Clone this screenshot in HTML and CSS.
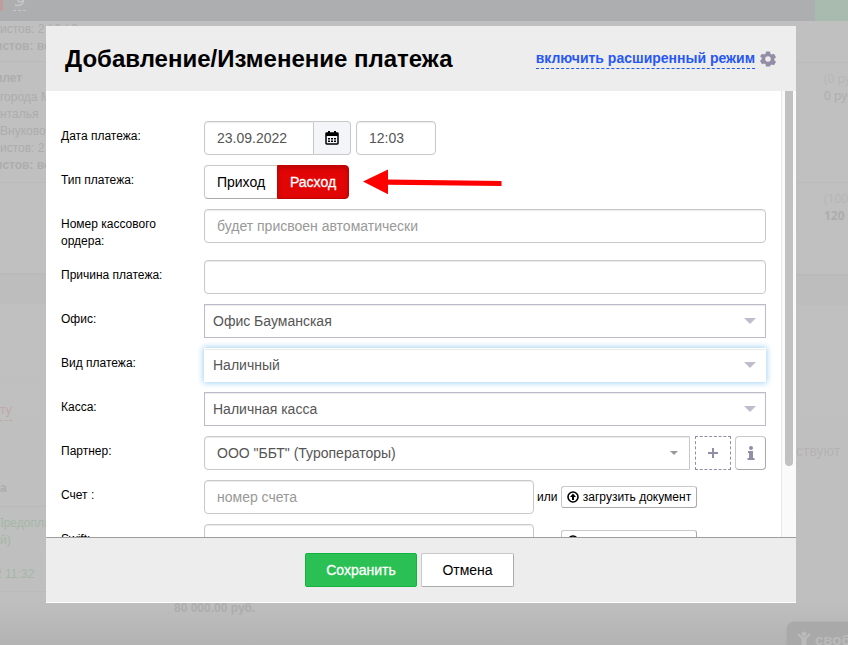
FILE: index.html
```html
<!DOCTYPE html>
<html lang="ru">
<head>
<meta charset="utf-8">
<title>Добавление/Изменение платежа</title>
<link rel="stylesheet" href="styles.css">
</head>
<body>
<div class="page">
  <div class="topbar">
    <span class="topbar-alert"></span>
    <svg class="topbar-icon" width="14" height="12" viewBox="0 0 14 12"><path d="M10.500 0C11 4 7 6.500 2 5M5 0C5 2.500 9 2.500 10 0" fill="none" stroke="#c6c7c8" stroke-width="1.500"/><path d="M0 10.500h3M5 10.500h3M10 10.500h3" stroke="#c6c7c8"/></svg>
    <span class="topbar-green"></span>
  </div>
  <div class="columns">
    <div class="left">
      <section class="cell"><p>истов: 2 / 0 / 0</p><p class="clipped"><b>истов: вс</b></p></section>
      <section class="cell trip"><p class="head clipped"><b>илет</b></p><p>города М</p><p>нталья</p><p>Внуково</p><p>истов: 2</p><p class="clipped"><b>истов: вс</b></p></section>
      <section class="cell space"></section>
      <section class="band"></section>
      <section class="cell agent"><a href="#">ту</a></section>
      <section class="cell caption"><b>а</b></section>
      <section class="cell paid"><p class="clipped">Предопла</p><p>й)</p><p class="when clipped">2 11:32</p></section>
      <section class="total"><b>80 000.00 руб.</b></section>
    </div>
    <div class="right">
      <section class="sum first"><p class="pale">(0 руб.)</p><p>0 руб.</p></section>
      <section class="sum"><p class="pale">(100%)</p><p><b>120 000</b></p></section>
      <section class="band"></section>
      <section class="none">ствуют</section>
    </div>
  </div>
  <div class="chat">
    <svg width="14" height="16" viewBox="0 0 14 16"><circle cx="7" cy="3" r="2.500" fill="#bababa"/><path d="M1 3l4 4h4l4-4" fill="none" stroke="#bababa" stroke-width="2"/><path d="M4.500 6h5v10h-5z" fill="#bababa"/></svg>
    <span>свободно</span>
  </div>
</div>

<div class="overlay">
  <form class="modal">
    <header class="modal-head">
      <h1>Добавление/Изменение платежа</h1>
      <a class="mode" href="#">включить расширенный режим</a>
      <svg class="gear" width="16" height="16" viewBox="0 0 16 16"><path fill-rule="evenodd" fill="#938da6" d="M6 .5h4l.5 2.200 1.400.8 2.100-.7 2 3.400-1.700 1.500v1.600l1.700 1.500-2 3.400-2.100-.7-1.400.8L10 15.500H6l-.5-2.200-1.400-.8-2.100.7-2-3.400 1.700-1.500V6.700L0 5.200l2-2.400 2.100.7 1.400-.8zM8 5.200a2.800 2.800 0 1 0 0 5.600 2.800 2.800 0 0 0 0-5.600z"/></svg>
    </header>

    <div class="modal-body">
      <div class="fields">
        <div class="row">
          <label for="date">Дата платежа:</label>
          <div class="control">
            <div class="date-group">
              <input id="date" class="input" type="text" value="23.09.2022">
              <button type="button" class="addon" aria-label="Календарь"><svg width="14" height="16" viewBox="0 0 14 16"><path d="M1.700 3h10.600q.7 0 .7.7v9.600q0 .7-.7.7H1.700q-.7 0-.7-.7V3.700q0-.7.7-.7z" fill="none" stroke="#000" stroke-width="1.500"/><path d="M1 3h12v3H1zM3 1h2v3H3zM9 1h2v3H9z"/><path d="M3 8h2v1.500H3zM6 8h2v1.500H6zM9 8h2v1.500H9zM3 10.500h2V12H3zM6 10.500h2V12H6zM9 10.500h2V12H9z"/></svg></button>
            </div>
            <input class="input time" type="text" value="12:03" aria-label="Время">
          </div>
        </div>
        <div class="row">
          <span class="label">Тип платежа:</span>
          <div class="control">
            <div class="toggle">
              <button type="button">Приход</button><button type="button" class="on">Расход</button>
            </div>
            <svg class="arrow" width="139" height="26" viewBox="0 0 139 26"><path d="M0 12.500L25 .5v10l113.500 1.500v5L25 15.800v9.400z" fill="#fe0000"/></svg>
          </div>
        </div>
        <div class="row">
          <label for="order">Номер кассового ордера:</label>
          <div class="control"><input id="order" class="input" type="text" placeholder="будет присвоен автоматически"></div>
        </div>
        <div class="row">
          <label for="reason">Причина платежа:</label>
          <div class="control"><input id="reason" class="input" type="text"></div>
        </div>
        <div class="row">
          <label for="office">Офис:</label>
          <div class="control"><div class="select"><select id="office"><option>Офис Бауманская</option></select></div></div>
        </div>
        <div class="row">
          <label for="kind">Вид платежа:</label>
          <div class="control"><div class="select active"><select id="kind"><option>Наличный</option></select></div></div>
        </div>
        <div class="row">
          <label for="cash">Касса:</label>
          <div class="control"><div class="select"><select id="cash"><option>Наличная касса</option></select></div></div>
        </div>
        <div class="row">
          <label for="partner">Партнер:</label>
          <div class="control">
            <div class="select partner"><select id="partner"><option>ООО "ББТ" (Туроператоры)</option></select></div>
            <button type="button" class="square add" aria-label="Добавить"><svg width="12" height="12" viewBox="0 0 12 12"><path d="M6 1v10M1 6h10" stroke="#938da6" stroke-width="2"/></svg></button>
            <button type="button" class="square info" aria-label="Информация"><svg width="8" height="14" viewBox="0 0 8 14"><circle cx="4" cy="2" r="2" fill="#938da6"/><path d="M1 5h5v7h1.500v2h-7v-2H2V7H1z" fill="#938da6"/></svg></button>
          </div>
        </div>
        <div class="row">
          <label for="account">Счет :</label>
          <div class="control account">
            <input id="account" class="input" type="text" placeholder="номер счета">
            <span class="or">или</span>
            <button type="button" class="upload"><svg width="12" height="12" viewBox="0 0 12 12"><circle cx="6" cy="6" r="5" fill="none" stroke="#000" stroke-width="1.600"/><path d="M6 2.500L9 6H7v3H5V6H3z"/></svg>загрузить документ</button>
          </div>
        </div>
        <div class="row">
          <label for="swift">Swift:</label>
          <div class="control account">
            <input id="swift" class="input" type="text">
            <span class="or">или</span>
            <button type="button" class="upload"><svg width="12" height="12" viewBox="0 0 12 12"><circle cx="6" cy="6" r="5" fill="none" stroke="#000" stroke-width="1.600"/><path d="M6 2.500L9 6H7v3H5V6H3z"/></svg>загрузить документ</button>
          </div>
        </div>
      </div>
      <div class="track"><div class="thumb"></div></div>
    </div>

    <footer class="modal-foot">
      <button type="button" class="btn save">Сохранить</button>
      <button type="button" class="btn cancel">Отмена</button>
    </footer>
  </form>
</div>
</body>
</html>
```

FILE: styles.css
```css
* { box-sizing: border-box; }

body {
  margin: 0;
  font-family: "Liberation Sans", Arial, sans-serif;
  font-size: 12px;
  line-height: 17px;
  color: #000;
}

p, h1 { margin: 0; }

button, input, select { font: inherit; color: inherit; margin: 0; }

/* Dimmed page behind the dialog */
.page {
  position: fixed;
  inset: 0;
  overflow: hidden;
  color: #adadad;
  background: linear-gradient(to top, #b3b3b3, #bfbfbf 45px, #c0c0c0);
}

.topbar {
  display: flex;
  height: 21px;
  background: #adaeb0;
}

.topbar-alert { width: 3px; height: 11px; background: #c09c9c; }
.topbar-icon { margin-left: 10px; }
.topbar-green { width: 33px; margin-left: auto; background: #a9bbae; }

.columns { display: flex; justify-content: space-between; }

.left { width: 300px; white-space: nowrap; }

.cell { border-bottom: 1px solid #bababa; padding-bottom: 6px; }
.clipped { text-indent: -5px; }
.trip { height: 121px; padding-top: 8px; }
.head { height: 19px; }
.space { height: 91px; }
.band { height: 30px; background: #bdbdbd; border-top: 1px solid #b9b9b9; }
.agent { height: 128px; padding-top: 98px; border-bottom: 0; }
.agent a { padding-bottom: 3px; color: #bea9a6; text-decoration: none; border-bottom: 1px dashed #bea9a6; }
.caption { height: 75px; padding-top: 48px; }
.paid { height: 85px; padding-top: 8px; color: #a3b8a4; }
.when { padding-top: 17px; }
.total { padding: 8px 0 0 174px; }

.right {
  width: 52px;
  padding-top: 41px;
  font-family: "Open Sans", sans-serif;
  white-space: nowrap;
}

.sum { height: 92px; padding: 7px 0 0 28px; border-bottom: 1px solid #bababa; }
.first { height: 121px; border-top: 1px solid #bababa; }
.pale { color: #b6b6b6; }
.none { padding-top: 138px; font-family: "Liberation Sans", Arial, sans-serif; font-size: 14px; color: #b3b3b3; }

.chat {
  position: absolute;
  right: 0;
  bottom: 0;
  width: 61px;
  height: 23px;
  display: flex;
  gap: 4px;
  padding: 9px 0 0 10px;
  overflow: hidden;
  border-radius: 8px 0 0 0;
  background: #a9a9a9;
  box-shadow: 0 0 2px #a0a0a0;
  color: #bababa;
  font-size: 15px;
  font-weight: bold;
}

.chat svg { flex: none; }

/* Dialog */
.overlay {
  position: fixed;
  inset: 0;
  display: flex;
  padding: 26px 52px 42px 46px;
}

.modal {
  flex: 1;
  display: flex;
  flex-direction: column;
  min-width: 0;
  padding-bottom: 1px;
  background: #fff;
}

.modal-head {
  display: flex;
  align-items: center;
  height: 65px;
  flex: none;
  padding: 0 20px 0 19px;
  background: #ededed;
}

h1 { flex: 1; font-size: 24px; line-height: 28px; font-weight: bold; }

.mode {
  color: #2757f5;
  font-size: 14px;
  line-height: 20px;
  font-weight: bold;
  text-decoration: none;
  border-bottom: 1px dashed #2757f5;
}

.gear { margin-left: 5px; }

.modal-body { flex: 1; min-height: 0; display: flex; overflow: hidden; }

.fields {
  flex: 1;
  min-width: 0;
  display: flex;
  flex-direction: column;
  gap: 10px;
  padding: 30px 15px 0 15px;
}

.row { display: flex; flex: none; }

.row > label, .label { width: 143px; flex: none; padding: 7px 30px 0 0; }

.control { flex: 1; min-width: 0; height: 34px; display: flex; align-items: center; }

.input {
  width: 100%;
  height: 34px;
  padding: 0 12px;
  border: 1px solid #c8c8c8;
  border-radius: 4px;
  background: #fff;
  box-shadow: inset 0 1px 1px #ececec;
  font-size: 14px;
  color: #555;
}

.input::placeholder { color: #999; opacity: 1; }

.date-group { display: flex; width: 147px; }
.date-group .input { flex: 1; min-width: 0; border-radius: 4px 0 0 4px; }

.addon {
  width: 37px;
  padding: 0;
  display: grid;
  place-items: center;
  border: 1px solid #c8c8c8;
  border-left: 0;
  border-radius: 0 4px 4px 0;
  background: #f4f5f8;
}

.time { width: 80px; margin-left: 5px; }

.toggle { display: flex; }

.toggle button {
  width: 73px;
  height: 34px;
  padding: 0;
  border: 1px solid #c8c8c8;
  border-bottom-color: #aaa;
  border-right: 0;
  border-radius: 4px 0 0 4px;
  background: #fff;
  font-size: 14px;
}

.toggle .on {
  width: 72px;
  border: 1px solid #c00303;
  border-radius: 0 4px 4px 0;
  background: #e20505;
  box-shadow: inset 0 2px 4px #b50404;
  color: #fff;
  -webkit-text-stroke: 0.3px #fff;
}

.arrow { margin-left: 14px; }

.select {
  position: relative;
  flex: 1;
  min-width: 0;
}

.select select {
  display: block;
  width: 100%;
  height: 34px;
  padding: 0 30px 0 8px;
  appearance: none;
  border: 1px solid #bdbacb;
  border-radius: 0;
  background: #fff;
  box-shadow: inset 0 1px 1px #ececec;
  font-size: 14px;
  color: #555;
  outline: 0;
}

.select::after {
  content: "";
  position: absolute;
  right: 10px;
  top: 14px;
  border: 6px solid transparent;
  border-top-color: #c0bccd;
  border-bottom: 0;
}

.active select {
  border-color: #fff;
  box-shadow: inset 0 1px 1px #ececec, 0 0 6px 1px #a5d3f5;
}

.partner select { padding-left: 12px; border-color: #c8c8c8; border-radius: 4px 0 0 4px; }
.partner::after { right: 12px; top: 15px; border-width: 4px; border-bottom: 0; border-top-color: #999; }

.square {
  height: 34px;
  padding: 0;
  display: grid;
  place-items: center;
  background: #fff;
}

.add { width: 36px; margin: 0 4px 0 5px; border: 1px dashed #938da6; }
.info { width: 31px; border: 1px solid #c8c8c8; border-bottom-color: #aaa; border-right-color: #aaa; border-radius: 4px; }

.account .input { width: 330px; }
.or { width: 27px; padding-left: 3px; }

.upload {
  width: 136px;
  height: 22px;
  padding: 0;
  display: flex;
  align-items: center;
  justify-content: center;
  gap: 4px;
  border: 1px solid #c8c8c8;
  border-bottom-color: #aaa;
  border-right-color: #aaa;
  border-radius: 3px;
  background: #fff;
  white-space: nowrap;
}

.track {
  width: 15px;
  flex: none;
  padding-left: 3px;
  border-left: 1px solid #e8e8e8;
  background: #fafafa;
}

.thumb { width: 8px; height: 84%; border-radius: 0 0 4px 4px; background: #c1c1c1; }

.modal-foot {
  flex: none;
  display: flex;
  justify-content: center;
  gap: 4px;
  padding: 15px 23px 15px 0;
  border-top: 1px solid #9e9e9e;
  background: #ededed;
}

.btn { height: 34px; padding: 0 20px; border: 1px solid #c8c8c8; border-radius: 2px; font-size: 14px; }
.save { width: 112px; background: #2ac053; border-color: #12b341; color: #fff; -webkit-text-stroke: 0.3px #fff; }
.cancel { width: 93px; background: #fff; border-bottom-color: #aaa; border-right-color: #aaa; }
```
